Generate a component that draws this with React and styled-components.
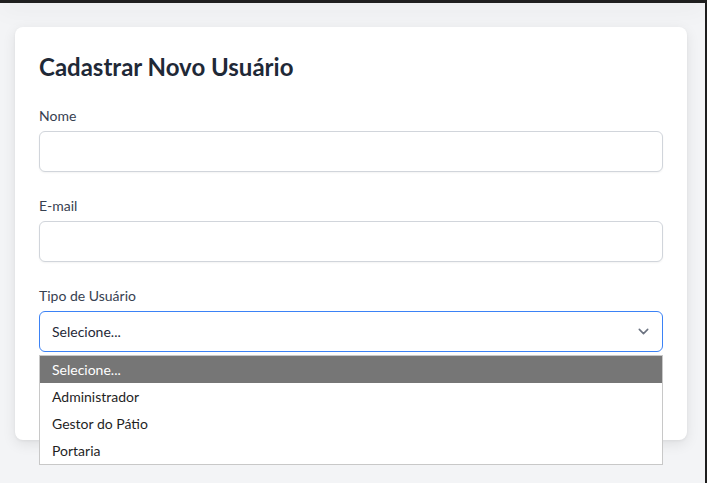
import React, { useState } from "react";
import styled, { createGlobalStyle } from "styled-components";

const GlobalStyle = createGlobalStyle`
  html, body {
    margin: 0;
    padding: 0;
    background: #f3f4f6;
    font-family: Lato, "Noto Sans", sans-serif;
  }
  * { box-sizing: border-box; }
`;

const Page = styled.div`
  min-height: 100vh;
  background: #f3f4f6;
  border-right: 2px solid #1e1e1e;
  overflow: hidden;
`;

const TopBar = styled.div`
  height: 3px;
  background: #1f1f1f;
  box-shadow: 0 2px 24px rgba(0, 0, 0, 0.2);
  position: relative;
  z-index: 1;
`;

const Content = styled.main`
  padding: 24px 18px 0 15px;
`;

const Card = styled.section`
  background: #fff;
  border-radius: 8px;
  padding: 24px;
  box-shadow: 0 4px 14px rgba(0, 0, 0, 0.09), 0 1px 3px rgba(0, 0, 0, 0.05);
`;

const Title = styled.h2`
  margin: 0 0 23px;
  font-size: 24px;
  line-height: 32px;
  font-weight: 700;
  color: #1f2937;
`;

const Field = styled.div`
  position: relative;
  margin-bottom: ${(p) => (p.$last ? "0" : "24px")};
`;

const Label = styled.label`
  display: block;
  font-size: 14px;
  line-height: 20px;
  color: #374151;
  margin-bottom: 5px;
`;

const Input = styled.input`
  display: block;
  width: 100%;
  height: 41px;
  border: 1px solid #d1d5db;
  border-radius: 6px;
  padding: 0 12px;
  font: inherit;
  font-size: 14px;
  outline: none;
  box-shadow: 0 1px 2px rgba(0, 0, 0, 0.05);
`;

const SelectBox = styled.div`
  display: flex;
  align-items: center;
  justify-content: space-between;
  height: 41px;
  border: 1px solid #3b82f6;
  border-radius: 6px;
  padding: 0 8px 0 12px;
  font-size: 14px;
  color: #1f2937;
  cursor: pointer;
`;

const Options = styled.ul`
  position: absolute;
  left: 0;
  right: 0;
  top: 100%;
  margin: 3px 0 0;
  padding: 0;
  list-style: none;
  background: #fff;
  border: 1px solid #c8c8c8;
  z-index: 5;
`;

const Option = styled.li`
  height: 27px;
  line-height: 27px;
  padding: 0 12px;
  font-size: 14px;
  color: ${(p) => (p.$active ? "#fff" : "#1f1f1f")};
  background: ${(p) => (p.$active ? "#767676" : "transparent")};
`;

const Actions = styled.div`
  display: flex;
  justify-content: flex-end;
  gap: 12px;
  margin-top: 24px;
  height: 40px;
`;

const Button = styled.button`
  border: none;
  border-radius: 6px;
  padding: 0 16px;
  font: inherit;
  font-size: 14px;
  color: #fff;
  background: #2563eb;
`;

const Chevron = () => (
  <svg width="21" height="21" viewBox="0 0 20 20" fill="none">
    <path
      d="M6 8l4 4 4-4"
      stroke="#6b7280"
      strokeWidth="1.5"
      strokeLinecap="round"
      strokeLinejoin="round"
    />
  </svg>
);

const tipos = ["Selecione...", "Administrador", "Gestor do Pátio", "Portaria"];

export default function App() {
  const [tipo, setTipo] = useState(0);
  const [open, setOpen] = useState(true);

  return (
    <>
      <GlobalStyle />
      <Page>
        <TopBar />
        <Content>
          <Card>
            <Title>Cadastrar Novo Usuário</Title>
            <Field>
              <Label>Nome</Label>
              <Input type="text" />
            </Field>
            <Field>
              <Label>E-mail</Label>
              <Input type="email" />
            </Field>
            <Field $last>
              <Label>Tipo de Usuário</Label>
              <SelectBox onClick={() => setOpen((o) => !o)}>
                <span>{tipos[tipo]}</span>
                <Chevron />
              </SelectBox>
              {open && (
                <Options>
                  {tipos.map((t, i) => (
                    <Option
                      key={t}
                      $active={i === tipo}
                      onClick={() => {
                        setTipo(i);
                        setOpen(false);
                      }}
                    >
                      {t}
                    </Option>
                  ))}
                </Options>
              )}
            </Field>
            <Actions>
              <Button>Cadastrar</Button>
            </Actions>
          </Card>
        </Content>
      </Page>
    </>
  );
}
